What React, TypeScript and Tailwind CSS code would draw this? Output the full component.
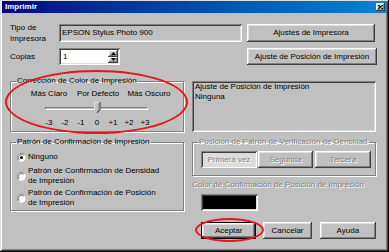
import React from 'react';

const raised =
  'bg-[#c0c0c0] shadow-[inset_-1px_-1px_0_#404040,inset_1px_1px_0_#fff,inset_-2px_-2px_0_#808080,inset_2px_2px_0_#dfdfdf]';
const sunken =
  'shadow-[inset_1px_1px_0_#808080,inset_-1px_-1px_0_#fff,inset_2px_2px_0_#404040,inset_-2px_-2px_0_#dfdfdf]';
const group =
  'border border-[#808080] shadow-[inset_1px_1px_0_#fff,1px_1px_0_#fff]';
const disabled = 'text-[#808080] [text-shadow:1px_1px_0_#fff]';

function Radio({ checked }: { checked?: boolean }) {
  return (
    <svg width="9" height="9" viewBox="0 0 12 12" className="shrink-0">
      <circle cx="6" cy="6" r="5.5" fill="#fff" />
      <path d="M10 2A5.5 5.5 0 0 0 2 10" stroke="#808080" strokeWidth="1" fill="none" />
      <path d="M9 3A4.2 4.2 0 0 0 3 9" stroke="#404040" strokeWidth="1" fill="none" />
      {checked && <circle cx="6" cy="6" r="2" fill="#000" />}
    </svg>
  );
}

function Thumb() {
  return (
    <svg width="7" height="12" viewBox="0 0 7 12" className="absolute left-[49px] top-[1px]">
      <polygon points="0,0 6,0 6,8 3,11 0,8" fill="#c0c0c0" />
      <polyline points="0,8 0,0 6,0" stroke="#fff" fill="none" strokeWidth="1" />
      <polyline points="6,0 6,8 3,11" stroke="#404040" fill="none" strokeWidth="1" />
      <polyline points="5,1 5,8 3,10" stroke="#808080" fill="none" strokeWidth="1" />
    </svg>
  );
}

export default function App() {
  return (
    <div className="relative w-[389px] h-[252px] bg-[#c0c0c0] text-black text-[8px] font-['Liberation_Sans',Arial,sans-serif] shadow-[inset_-1px_-1px_0_#000,inset_1px_1px_0_#dfdfdf,inset_-2px_-2px_0_#404040,inset_2px_2px_0_#fff,inset_-3px_-3px_0_#808080] pt-[1px] px-[2px] overflow-hidden">
      {/* Title bar */}
      <div className="flex items-center justify-between h-[12px] pl-[3px] pr-[2px] bg-gradient-to-r from-[#000080] to-[#1084d0]">
        <span className="text-white font-bold leading-[12px]">Imprimir</span>
        <div className={`w-[9px] h-[8px] flex items-center justify-center ${raised}`}>
          <svg width="5" height="4" viewBox="0 0 5 4">
            <path d="M0 0L5 4M5 0L0 4" stroke="#000" strokeWidth="1.2" />
          </svg>
        </div>
      </div>

      <div className="pl-[8px]">
        {/* Printer type row */}
        <div className="flex mt-[11px] h-[18px]">
          <div className="w-[49px] leading-[11px] -mt-[2px]">
            Tipo de
            <br />
            Impresora
          </div>
          <div className={`w-[183px] pl-[3px] leading-[18px] ${sunken}`}>EPSON Stylus Photo 900</div>
          <button className={`ml-[5px] w-[128px] h-[18px] ${raised}`}>Ajustes de Impresora</button>
        </div>

        {/* Copies row */}
        <div className="flex mt-[6px] h-[17px]">
          <div className="w-[49px] leading-[17px]">Copias</div>
          <div className={`relative w-[61px] bg-white pl-[4px] leading-[17px] ${sunken}`}>
            1
            <div className="absolute right-[2px] top-[2px] w-[10px] h-[13px] flex flex-col">
              <div className={`flex-1 flex items-center justify-center ${raised}`}>
                <svg width="5" height="3" viewBox="0 0 5 3">
                  <polygon points="2.5,0 5,3 0,3" fill="#000" />
                </svg>
              </div>
              <div className={`flex-1 flex items-center justify-center ${raised}`}>
                <svg width="5" height="3" viewBox="0 0 5 3">
                  <polygon points="0,0 5,0 2.5,3" fill="#000" />
                </svg>
              </div>
            </div>
          </div>
          <button className={`ml-[127px] w-[130px] h-[17px] ${raised}`}>
            Ajuste de Posición de Impresión
          </button>
        </div>

        <div className="flex gap-[8px] mt-[11px]">
          {/* Left column */}
          <div className="w-[174px]">
            <fieldset className={group}>
              <legend className="ml-[5px] px-[1px] leading-[10px]">Corrección de Color de Impresión</legend>
              <div className="pl-[14px] pt-[3px] pb-[3px]">
                <div className="flex leading-[10px]">
                  <span className="w-[48px] text-center">Más Claro</span>
                  <span className="w-[50px] text-center">Por Defecto</span>
                  <span className="w-[52px] text-center">Más Oscuro</span>
                </div>
                <div className="relative ml-[20px] w-[103px] h-[14px] mt-[2px] flex items-center">
                  <div className="w-full h-[3px] border-t border-l border-[#808080] border-b border-r border-b-white border-r-white bg-[#c0c0c0]" />
                  <Thumb />
                </div>
                <div className="flex ml-[16px] mt-[3px] leading-[10px]">
                  {['-3', '-2', '-1', '0', '+1', '+2', '+3'].map((n) => (
                    <span key={n} className="w-[16px] text-center">
                      {n}
                    </span>
                  ))}
                </div>
              </div>
            </fieldset>

            <fieldset className={`${group} mt-[5px]`}>
              <legend className="ml-[5px] px-[1px] leading-[10px]">Patrón de Confirmación de Impresión</legend>
              <div className="pl-[6px] pt-[5px] pb-[2px] leading-[10px]">
                <div className="flex items-center gap-[2px]">
                  <Radio checked />
                  <span>Ninguno</span>
                </div>
                <div className="flex items-center gap-[2px] mt-[4px]">
                  <Radio />
                  <span>
                    Patrón de Confirmación de Densidad
                    <br />
                    de Impresión
                  </span>
                </div>
                <div className="flex items-center gap-[2px] mt-[2px]">
                  <Radio />
                  <span>
                    Patrón de Confirmación de Posición
                    <br />
                    de Impresión
                  </span>
                </div>
              </div>
            </fieldset>
          </div>

          {/* Right column */}
          <div className="w-[184px] mt-[5px]">
            <div className={`h-[51px] pl-[3px] pt-[1px] leading-[10px] ${sunken}`}>
              Ajuste de Posición de Impresión
              <br />
              Ninguna
            </div>

            <fieldset className={`${group} mt-[5px]`}>
              <legend className={`ml-[5px] px-[1px] leading-[10px] ${disabled}`}>
                Posición de Patrón de Verificación de Densidad
              </legend>
              <div className={`flex pl-[8px] pt-[4px] pb-[7px] ${disabled}`}>
                <div className={`w-[56px] h-[17px] flex items-center justify-center bg-[#dcdcdc] ${sunken}`}>
                  Primera vez
                </div>
                <div className={`ml-[1px] w-[55px] h-[17px] flex items-center justify-center ${raised}`}>
                  Segunda
                </div>
                <div className={`ml-[2px] w-[56px] h-[17px] flex items-center justify-center ${raised}`}>
                  Tercera
                </div>
              </div>
            </fieldset>

            <div className={`mt-[4px] leading-[10px] ${disabled}`}>
              Color de Confirmación de Posición de Impresión
            </div>
            <div className={`ml-[9px] mt-[4px] w-[57px] h-[17px] bg-black ${sunken}`} />

            <div className="flex mt-[11px]">
              <button className="ml-[9px] w-[56px] h-[17px] border border-black">
                <div className={`w-full h-full flex items-center justify-center ${raised}`}>Aceptar</div>
              </button>
              <button className={`ml-[7px] w-[49px] h-[17px] ${raised}`}>Cancelar</button>
              <button className={`ml-[8px] w-[57px] h-[17px] ${raised}`}>Ayuda</button>
            </div>
          </div>
        </div>
      </div>

      {/* Red highlight marks */}
      <div className="absolute left-[5px] top-[70px] w-[183px] h-[64px] rounded-[50%] border-2 border-[#e8141c]" />
      <div className="absolute left-[195px] top-[218px] w-[69px] h-[24px] rounded-[50%] border-2 border-[#e8141c]" />
    </div>
  );
}
